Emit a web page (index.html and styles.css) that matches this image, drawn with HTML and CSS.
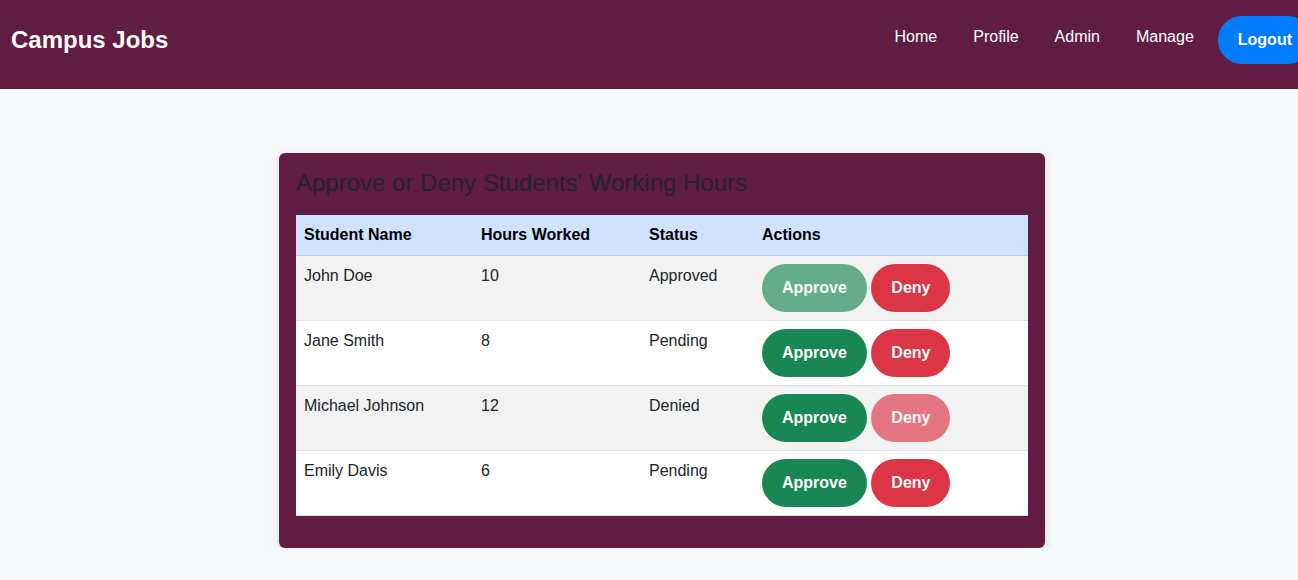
FILE: index.html
```html
<!DOCTYPE html>
<html lang="en">
<head>
<meta charset="utf-8">
<title>Campus Jobs</title>
<link rel="stylesheet" href="styles.css">
</head>
<body>
<header class="topbar">
  <div class="brand">Campus Jobs</div>
  <nav class="nav">
    <a class="nav-link" href="#">Home</a>
    <a class="nav-link" href="#">Profile</a>
    <a class="nav-link" href="#">Admin</a>
    <a class="nav-link" href="#">Manage</a>
    <button class="logout">Logout</button>
  </nav>
</header>
<main class="main">
  <section class="card">
    <h2 class="card-title">Approve or Deny Students' Working Hours</h2>
    <table class="hours">
      <thead>
        <tr>
          <th class="c-name">Student Name</th>
          <th class="c-hours">Hours Worked</th>
          <th class="c-status">Status</th>
          <th class="c-actions">Actions</th>
        </tr>
      </thead>
      <tbody>
        <tr class="odd">
          <td>John Doe</td><td>10</td><td>Approved</td>
          <td><button class="btn approve disabled">Approve</button> <button class="btn deny">Deny</button></td>
        </tr>
        <tr>
          <td>Jane Smith</td><td>8</td><td>Pending</td>
          <td><button class="btn approve">Approve</button> <button class="btn deny">Deny</button></td>
        </tr>
        <tr class="odd">
          <td>Michael Johnson</td><td>12</td><td>Denied</td>
          <td><button class="btn approve">Approve</button> <button class="btn deny disabled">Deny</button></td>
        </tr>
        <tr>
          <td>Emily Davis</td><td>6</td><td>Pending</td>
          <td><button class="btn approve">Approve</button> <button class="btn deny">Deny</button></td>
        </tr>
      </tbody>
    </table>
  </section>
</main>
</body>
</html>
```
FILE: styles.css
```css
html, body {
  margin: 0;
  padding: 0;
  overflow-x: hidden;
}
body {
  background: #f8f9fa;
  font-family: "Liberation Sans", Arial, sans-serif;
  color: #212529;
  font-size: 16px;
}
.topbar {
  background: #611c41;
  display: flex;
  align-items: center;
  justify-content: space-between;
  padding: 16px 0 25px 11px;
  height: 48px;
}
.brand {
  color: #fff;
  font-size: 24px;
  font-weight: bold;
  line-height: 28px;
}
.nav {
  display: flex;
  align-items: center;
  margin-right: -14px;
}
.nav-link {
  color: #fff;
  text-decoration: none;
  font-size: 16px;
  line-height: 20px;
  margin-left: 36px;
  margin-bottom: 7px;
}
.nav-link:first-child {
  margin-left: 0;
}
.logout {
  margin-left: 24px;
  background: #007bff;
  color: #fff;
  border: none;
  border-radius: 24px;
  font-family: "Liberation Sans", Arial, sans-serif;
  font-size: 16px;
  font-weight: bold;
  line-height: 24px;
  padding: 12px 20px;
  height: 48px;
}
.main {
  padding: 64px 0 0 279px;
}
.card {
  width: 732px;
  background: #611c41;
  border-radius: 6px;
  padding: 15px 17px 32px 17px;
  box-shadow: 0 3px 10px rgba(0, 0, 0, 0.15);
}
.card-title {
  margin: 0 0 18px 0;
  font-size: 24px;
  font-weight: normal;
  line-height: 29px;
  color: #212529;
}
.hours {
  width: 732px;
  border-collapse: collapse;
  background: #fff;
}
.hours th {
  background: #cfe2ff;
  text-align: left;
  font-weight: bold;
  color: #000;
  padding: 8px;
  line-height: 24px;
  border-bottom: 1px solid #b6cdee;
}
.hours td {
  padding: 8px;
  line-height: 24px;
  vertical-align: top;
  color: #212529;
  border-bottom: 1px solid #dee2e6;
}
.hours tr.odd td {
  background: #f2f2f2;
}
.c-name { width: 161px; }
.c-hours { width: 152px; }
.c-status { width: 97px; }
.btn {
  border: none;
  border-radius: 24px;
  color: #fff;
  font-family: "Liberation Sans", Arial, sans-serif;
  font-size: 16px;
  font-weight: bold;
  line-height: 24px;
  padding: 12px 20px;
  height: 48px;
  vertical-align: top;
}
.approve { background: #198754; }
.deny { background: #dc3545; }
.btn.disabled { opacity: 0.65; }
```
